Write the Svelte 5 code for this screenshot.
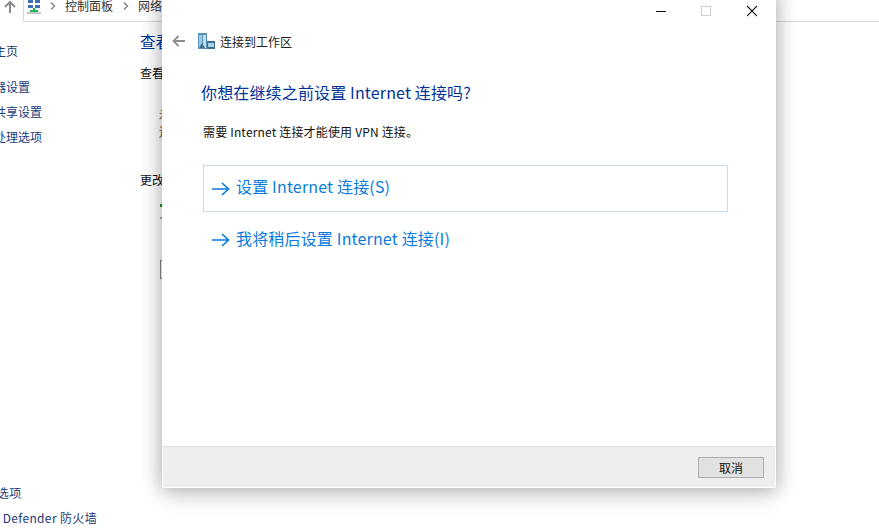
<script>
  const sideTop = ['更改适配器设置', '更改高级共享设置', '媒体流式处理选项'];
  const sideBottom = ['Internet 选项', 'Windows Defender 防火墙'];
</script>

<div class="page">
  <div class="addressbar">
    <svg class="up" width="14" height="14" viewBox="0 0 14 14"><path d="M7 13V2M2 7 7 2l5 5" fill="none" stroke="#8a8a8a" stroke-width="2"/></svg>
    <div class="crumbs">
      <svg class="netico" width="15" height="15" viewBox="0 0 15 15">
        <rect x="1" y="0" width="5" height="3" fill="#3f6fb5"/><rect x="8" y="0" width="5" height="3" fill="#3f6fb5"/>
        <rect x="1" y="5" width="5" height="3" fill="#3f6fb5"/><rect x="8" y="5" width="5" height="3" fill="#3f6fb5"/>
        <rect x="6" y="8" width="2" height="2" fill="#16a34a"/><rect x="3" y="10" width="8" height="2" fill="#1dbb5a"/>
        <rect x="0" y="12" width="14" height="2" fill="#c4c8c4"/>
      </svg>
      <svg class="chev" width="6" height="8" viewBox="0 0 6 8"><path d="M1 0.500 4.500 4 1 7.500" fill="none" stroke="#888" stroke-width="1.500"/></svg>
      <span>控制面板</span>
      <svg class="chev" width="6" height="8" viewBox="0 0 6 8"><path d="M1 0.500 4.500 4 1 7.500" fill="none" stroke="#888" stroke-width="1.500"/></svg>
      <span>网络和 Internet</span>
    </div>
  </div>

  <div class="side">
    <a class="first">控制面板主页</a>
    {#each sideTop as t}<a>{t}</a>{/each}
  </div>
  <div class="side bottom">
    {#each sideBottom as t}<a>{t}</a>{/each}
  </div>

  <div class="behind">
    <div class="bh1">查看基本网络信息并设置连接</div>
    <div class="bh2">查看活动网络</div>
    <div class="bh3">更改网络设置</div>
    <div class="bh4">未连接</div>
    <div class="bh5">连接</div>
    <span class="frag green"></span>
    <span class="frag grey"></span>
    <span class="frag box"></span>
  </div>

  <div class="dialog">
    <div class="winbtns">
      <svg width="10" height="22" viewBox="0 0 10 22"><path d="M0 11.500H10" stroke="#111"/></svg>
      <svg width="10" height="22" viewBox="0 0 10 22"><rect x="0.500" y="6.500" width="9" height="9" fill="none" stroke="#ccc"/></svg>
      <svg width="10" height="22" viewBox="0 0 10 22"><path d="M0 6l10 10M10 6 0 16" stroke="#111" stroke-width="1.100"/></svg>
    </div>
    <div class="head">
      <svg class="back" width="13" height="12" viewBox="0 0 13 12"><path d="M13 6H2M6.500 1 1.500 6l5 5" fill="none" stroke="#8c8c8c" stroke-width="1.800"/></svg>
      <svg class="bld" width="17" height="17" viewBox="0 0 17 17">
        <rect x="0" y="0" width="9" height="16" fill="#5a94b8"/><rect x="1" y="2" width="3" height="13" fill="#9ccbe3"/><rect x="5" y="2" width="3" height="13" fill="#bcdff0"/>
        <path d="M1 15l3-5 3 5z" fill="#3f6f8f"/>
        <rect x="9" y="8" width="8" height="8" fill="#3f6f8f"/><rect x="10" y="10" width="6" height="4" fill="#a9d2e6"/>
      </svg>
      <span>连接到工作区</span>
    </div>
    <div class="body">
      <h1>你想在继续之前设置 Internet 连接吗?</h1>
      <p>需要 Internet 连接才能使用 VPN 连接。</p>
      <div class="opt boxed">
        <svg width="18" height="14" viewBox="0 0 18 14"><path d="M0 7H16.500M10 1l6.500 6-6.500 6" fill="none" stroke="#0b7bdc" stroke-width="1.700"/></svg>
        <span>设置 Internet 连接(S)</span>
      </div>
      <div class="opt second">
        <svg width="18" height="14" viewBox="0 0 18 14"><path d="M0 7H16.500M10 1l6.500 6-6.500 6" fill="none" stroke="#0b7bdc" stroke-width="1.700"/></svg>
        <span>我将稍后设置 Internet 连接(I)</span>
      </div>
    </div>
    <div class="foot"><button>取消</button></div>
  </div>
</div>

<style>
  :global(body) { margin: 0; background: #fff; }
  .page {
    position: relative;
    width: 879px;
    height: 532px;
    overflow: hidden;
    background: #fff;
    font-family: "Noto Sans CJK SC", "Noto Sans", sans-serif;
    font-size: 12px;
    color: #111;
  }
  .addressbar { display: flex; height: 22px; }
  .up { margin: 0 0 0 3px; flex: none; }
  .crumbs {
    margin-left: 6px;
    flex: 1;
    display: flex;
    align-items: flex-start;
    height: 22px;
    box-sizing: border-box;
    padding-left: 3px;
    border-left: 1px solid #d9d9d9;
    border-bottom: 1px solid #d9d9d9;
    white-space: nowrap;
    color: #333;
    line-height: 12px;
  }
  .netico { flex: none; }
  .chev { flex: none; margin: 2px 9px 0 8px; }
  .crumbs span + .chev { margin-left: 10px; }
  .side { position: absolute; left: -54px; top: 40px; display: flex; flex-direction: column; color: #1c3a78; }
  .side a { height: 25px; line-height: 21px; white-space: nowrap; }
  .side .first { margin-bottom: 11px; }
  .side.bottom { top: 482px; letter-spacing: 0.360px; }
  .behind { position: absolute; left: 140px; top: 0; width: 22px; height: 532px; overflow: hidden; white-space: nowrap; }
  .bh1 { position: absolute; top: 30px; font-size: 15.500px; color: #003399; }
  .bh2 { position: absolute; top: 64px; }
  .bh3 { position: absolute; top: 171px; }
  .bh4 { position: absolute; top: 105px; left: 19px; color: #7a4a10; }
  .bh5 { position: absolute; top: 123px; left: 19px; color: #7a4a10; }
  .frag { position: absolute; left: 20px; }
  .green { top: 204px; width: 2px; height: 3px; background: #159a1c; }
  .grey { top: 217px; width: 2px; height: 2px; background: #aaa; }
  .box { top: 260px; width: 2px; height: 19px; border: 1px solid #8a8a8a; border-right: 0; box-sizing: border-box; }
  .dialog {
    position: absolute;
    left: 162px;
    top: -10px;
    width: 614px;
    height: 498px;
    background: #fff;
    box-shadow: 0 0 18px rgba(0, 0, 0, 0.28), 0 8px 22px rgba(0, 0, 0, 0.12);
    display: flex;
    flex-direction: column;
  }
  .winbtns { position: absolute; right: 19px; top: 10px; display: flex; gap: 35px; }
  .winbtns svg + svg + svg { margin-left: 1px; }
  .head { display: flex; align-items: center; margin-top: 40px; height: 22px; padding-left: 10px; color: #222; }
  .back { margin-right: 13px; }
  .bld { margin-right: 5px; }
  .body { flex: 1; padding: 0 48px 0 39px; }
  h1 { margin: 28px 0 0; font-size: 16px; font-weight: 400; color: #003399; line-height: 24px; letter-spacing: 0.150px; }
  p { margin: 19px 0 0 2px; font-size: 12px; line-height: 18px; color: #111; letter-spacing: 0.170px; }
  .opt { display: flex; align-items: center; gap: 6px; height: 47px; padding-left: 8px; margin-left: 2px; color: #0b7bdc; font-size: 16px; box-sizing: border-box; border: 1px solid transparent; white-space: nowrap; letter-spacing: 0.170px; }
  .boxed { margin-top: 24px; border-color: #c6dcef; }
  .boxed span { margin-bottom: 6px; }
  .second { margin-top: 4px; }
  .second span { margin-bottom: 4px; }
  .foot { height: 41px; margin: 0 1px 1px; box-sizing: border-box; background: #eeeeee; border-top: 1px solid #dddddd; display: flex; justify-content: flex-end; align-items: center; padding-right: 11px; }
  button { width: 66px; height: 21px; padding: 0; border: 1px solid #adadad; background: #e1e1e1; font: inherit; font-size: 12px; color: #111; }
</style>
